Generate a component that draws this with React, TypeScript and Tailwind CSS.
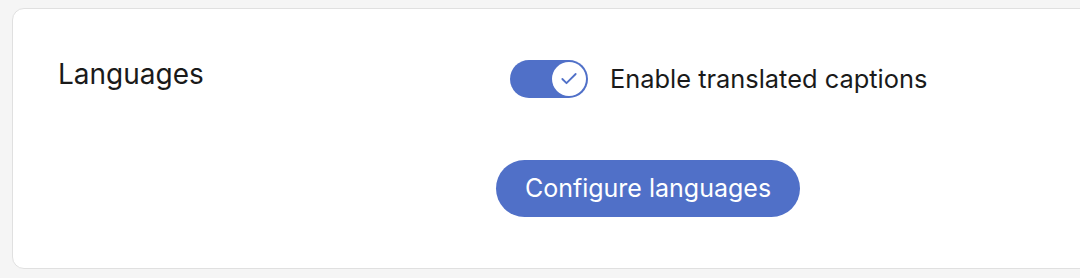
import { Check } from "lucide-react";

export default function App() {
  return (
    <div className="h-[278px] w-[1080px] overflow-hidden bg-[#f5f5f5] pl-[12px] pt-[8px] font-['Inter',sans-serif] text-[#1a1a1a]">
      <div className="flex h-[261px] w-[1100px] rounded-[12px] border border-[#e0e0e0] bg-white pl-[45px] pt-[48px]">
        <div className="w-[438px] text-[28px] leading-[34px]">Languages</div>
        <div className="flex flex-col items-start">
          <div className="ml-[14px] mt-[3px] flex items-center gap-[22px]">
            <button className="flex h-[38px] w-[78px] items-center justify-end rounded-full bg-[#5070c8] p-[2px]">
              <span className="flex h-[34px] w-[34px] items-center justify-center rounded-full bg-white text-[#5070c8]">
                <Check size={20} strokeWidth={2.2} />
              </span>
            </button>
            <span className="text-[25.4px] leading-[32px]">Enable translated captions</span>
          </div>
          <button className="mt-[62px] h-[57px] w-[304px] rounded-full bg-[#5070c8] text-[25px] text-white">
            Configure languages
          </button>
        </div>
      </div>
    </div>
  );
}
